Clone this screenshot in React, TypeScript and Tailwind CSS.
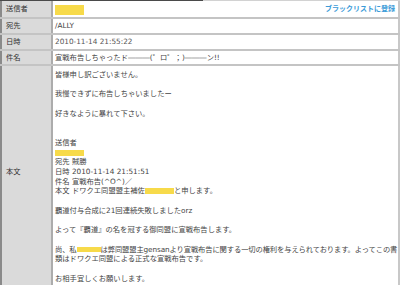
import React from 'react'

const font = { fontFamily: '"DejaVu Sans", "Noto Sans CJK JP", sans-serif' }

function Row({ label, h, children, className = '' }: { label: string; h: string; children?: React.ReactNode; className?: string }) {
  return (
    <div className={`flex border-b-2 border-[#c4c4c4] ${h}`}>
      <div className="w-[53px] shrink-0 flex items-center bg-[#dadada] border-l-2 border-l-[#8a8a8a] border-r-2 border-r-[#acacac] pl-[4px] text-[#333]">
        {label}
      </div>
      <div className={`flex-1 min-w-0 flex items-center bg-white border-r-2 border-r-[#c8c8c8] pl-[2px] pr-[3px] text-[#444] ${className}`}>
        {children}
      </div>
    </div>
  )
}

function Mask({ w, h }: { w: string; h: string }) {
  return <span className={`inline-block align-middle bg-[#f7da4a] ${w} ${h}`} />
}

export default function App() {
  return (
    <div className="w-[400px] h-[285px] overflow-hidden bg-white text-[7.3px] leading-[9.71px]" style={font}>
      <div className="flex h-px">
        <div className="w-[203px] bg-[#4a4a4a]" />
        <div className="flex-1 bg-[#d2d2d2]" />
      </div>

      <Row label="送信者" h="h-[18px]" className="justify-between pt-[2px]">
        <Mask w="w-[29px]" h="h-[10px]" />
        <span className="font-bold text-[7px] text-[#3b9bd8]">ブラックリストに登録</span>
      </Row>
      <Row label="宛先" h="h-[16px]">/ALLY</Row>
      <Row label="日時" h="h-[16px]">
        <span className="text-[#555]">2010-11-14 21:55:22</span>
      </Row>
      <Row label="件名" h="h-[15px]">宣戦布告しちゃったド―――(゜ロ゜；)―――ン!!</Row>

      <div className="flex">
        <div className="w-[53px] shrink-0 flex items-center bg-[#dadada] border-l-2 border-l-[#8a8a8a] border-r-2 border-r-[#acacac] pl-[4px] pb-[10px] text-[#333]">
          本文
        </div>
        <div className="flex-1 min-w-0 bg-white border-r-2 border-r-[#c8c8c8] pl-[2px] pt-[4px] pb-[4px] text-[#444] whitespace-nowrap overflow-hidden">
          <div>皆様申し訳ございません。</div>
          <div>&nbsp;</div>
          <div>我慢できずに布告しちゃいましたー</div>
          <div>&nbsp;</div>
          <div>好きなように暴れて下さい。</div>
          <div>&nbsp;</div>
          <div>&nbsp;</div>
          <div>送信者</div>
          <div><Mask w="w-[29px]" h="h-[6px]" /></div>
          <div>宛先 賊勝</div>
          <div>日時 2010-11-14 21:51:51</div>
          <div>件名 宣戦布告(^O^)／</div>
          <div>本文 ドワクエ同盟盟主補佐<Mask w="w-[29px]" h="h-[6px]" />と申します。</div>
          <div>&nbsp;</div>
          <div>覇道付与合成に21回連続失敗しましたorz</div>
          <div>&nbsp;</div>
          <div>よって『覇道』の名を冠する御同盟に宣戦布告します。</div>
          <div>&nbsp;</div>
          <div className="tracking-[-0.12px]">尚、私<Mask w="w-[24px]" h="h-[5px]" />は弊同盟盟主gensanより宣戦布告に関する一切の権利を与えられております。よってこの書</div>
          <div>類はドワクエ同盟による正式な宣戦布告です。</div>
          <div>&nbsp;</div>
          <div>お相手宜しくお願いします。</div>
        </div>
      </div>
    </div>
  )
}
